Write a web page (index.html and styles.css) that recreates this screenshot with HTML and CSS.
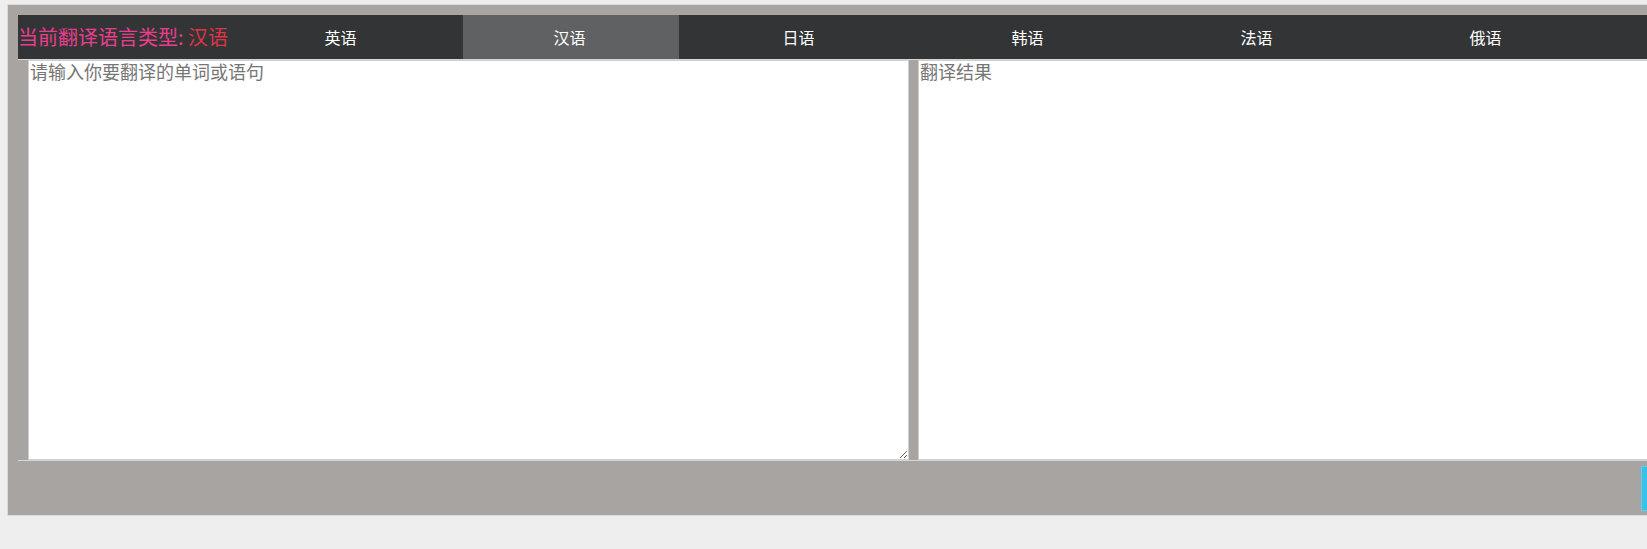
FILE: index.html
```html
<!DOCTYPE html>
<html lang="zh-CN">
<head>
<meta charset="utf-8">
<title>翻译</title>
<link rel="stylesheet" href="styles.css">
</head>
<body>
<div class="box">
  <div class="nav">
    <div class="current">当前翻译语言类型: <span class="lang">汉语</span></div>
    <div class="tab">英语</div>
    <div class="tab active">汉语</div>
    <div class="tab">日语</div>
    <div class="tab">韩语</div>
    <div class="tab">法语</div>
    <div class="tab">俄语</div>
  </div>
  <div class="areas">
    <textarea class="field" placeholder="请输入你要翻译的单词或语句"></textarea>
    <textarea class="field" placeholder="翻译结果"></textarea>
  </div>
  <div class="foot">
    <button class="btn" type="button" aria-label="翻译"></button>
  </div>
</div>
</body>
</html>
```
FILE: styles.css
```css
html, body {
  margin: 0;
  padding: 0;
  background: #eeeeee;
  overflow: hidden;
  font-family: "Noto Sans CJK SC", "Noto Sans", sans-serif;
}
.box {
  margin: 4px 0 0 7px;
  width: 1810px;
  padding: 10px 10px 0 10px;
  background: #a8a4a2;
  border: 1px solid #dadada;
}
.nav {
  display: flex;
  height: 44px;
  background: #333436;
  line-height: 44px;
  color: #fff;
  font-size: 16px;
}
.current {
  width: 216px;
  flex: none;
  font-size: 20px;
  color: #e83e8c;
  white-space: nowrap;
}
.lang {
  color: #dc3545;
}
.tab {
  width: 216px;
  flex: none;
  margin-right: 13px;
  text-align: center;
  padding-right: 3px;
  box-sizing: border-box;
}
.tab.active {
  background: #606162;
}
.areas {
  display: flex;
  gap: 9px;
  padding-left: 10px;
  border-top: 1px solid #d6d6d6;
  border-bottom: 1px solid #d6d6d6;
}
.field {
  box-sizing: border-box;
  width: 881px;
  height: 400px;
  margin: 0;
  padding: 0 1px;
  border: 1px solid #cfcfcf;
  background: #fff;
  font-family: "Noto Sans CJK SC", "Noto Sans", sans-serif;
  font-size: 18px;
  line-height: 20px;
  flex: none;
}
.field::placeholder {
  color: #767676;
}
.foot {
  display: flex;
  justify-content: flex-end;
  padding: 5px 0 4px;
}
.btn {
  width: 160px;
  height: 45px;
  margin-right: 27px;
  background: #3bc0e8;
  border: 1px solid #62cdef;
}
```
